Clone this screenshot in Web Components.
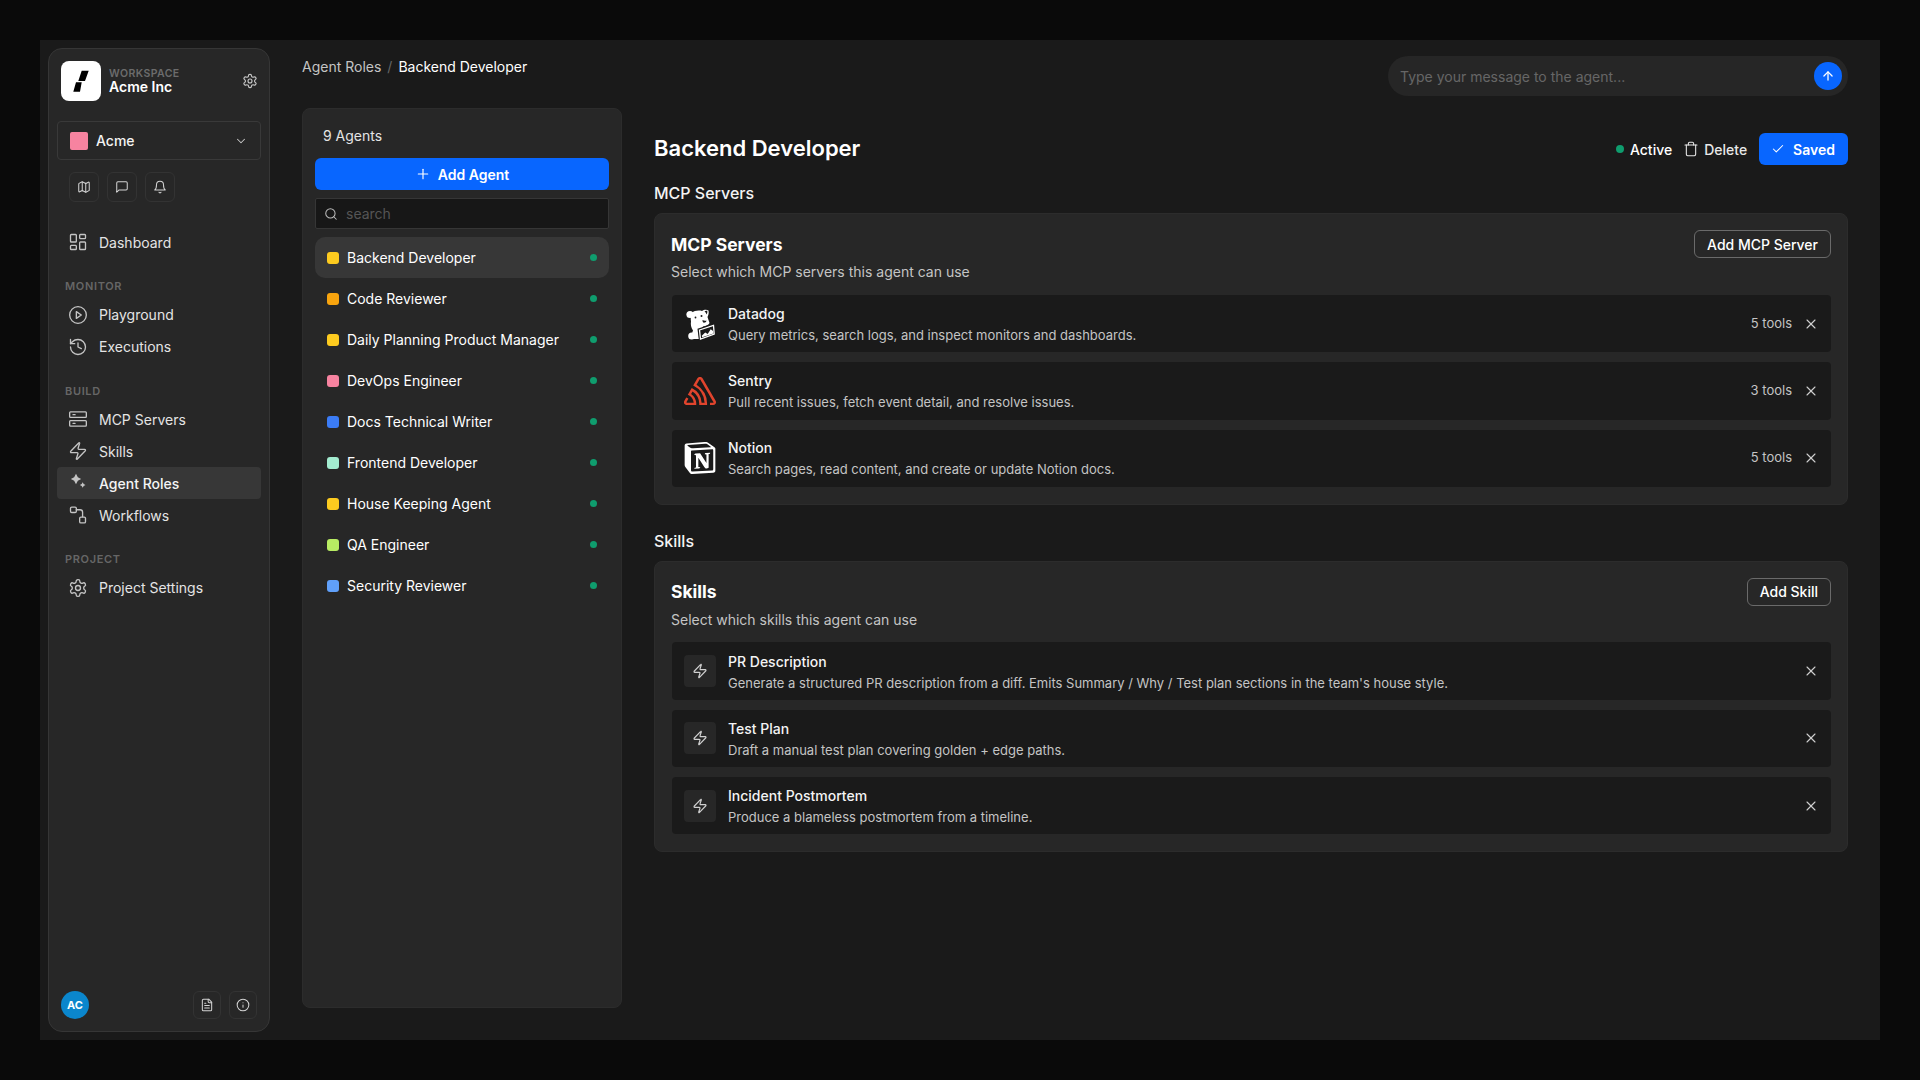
<!DOCTYPE html>
<html lang="en">
<head>
<meta charset="utf-8">
<title>Agent Roles</title>
<style>
    html, body { margin: 0; height: 100%; background: #0a0a0a; }
    body { font-family: Inter, "Liberation Sans", sans-serif; color: #fff; overflow: hidden; }
</style>
</head>
<body>
<app-frame>
    <app-sidebar slot="sidebar">
        <nav-link icon="dashboard">Dashboard</nav-link>
        <nav-group label="MONITOR">
            <nav-link icon="play">Playground</nav-link>
            <nav-link icon="history">Executions</nav-link>
        </nav-group>
        <nav-group label="BUILD">
            <nav-link icon="server">MCP Servers</nav-link>
            <nav-link icon="zap">Skills</nav-link>
            <nav-link icon="sparkles" active>Agent Roles</nav-link>
            <nav-link icon="workflow">Workflows</nav-link>
        </nav-group>
        <nav-group label="PROJECT">
            <nav-link icon="settings">Project Settings</nav-link>
        </nav-group>
    </app-sidebar>
    <top-bar slot="top" parent="Agent Roles" current="Backend Developer" placeholder="Type your message to the agent..."></top-bar>
    <agent-list slot="list" count="9 Agents">
        <agent-item color="#fdcb1f" selected>Backend Developer</agent-item>
        <agent-item color="#f8a40e">Code Reviewer</agent-item>
        <agent-item color="#fdcb1f">Daily Planning Product Manager</agent-item>
        <agent-item color="#f783a0">DevOps Engineer</agent-item>
        <agent-item color="#3b7cf6">Docs Technical Writer</agent-item>
        <agent-item color="#a3ecd0">Frontend Developer</agent-item>
        <agent-item color="#fdcb1f">House Keeping Agent</agent-item>
        <agent-item color="#b8ec63">QA Engineer</agent-item>
        <agent-item color="#60a0fa">Security Reviewer</agent-item>
    </agent-list>
    <role-detail slot="detail" title-text="Backend Developer">
        <section-card section="MCP Servers" subtitle="Select which MCP servers this agent can use" action="Add MCP Server">
            <resource-row logo="datadog" name="Datadog" desc="Query metrics, search logs, and inspect monitors and dashboards." meta="5 tools"></resource-row>
            <resource-row logo="sentry" name="Sentry" desc="Pull recent issues, fetch event detail, and resolve issues." meta="3 tools"></resource-row>
            <resource-row logo="notion" name="Notion" desc="Search pages, read content, and create or update Notion docs." meta="5 tools"></resource-row>
        </section-card>
        <section-card section="Skills" subtitle="Select which skills this agent can use" action="Add Skill">
            <resource-row logo="skill" name="PR Description" desc="Generate a structured PR description from a diff. Emits Summary / Why / Test plan sections in the team's house style."></resource-row>
            <resource-row logo="skill" name="Test Plan" desc="Draft a manual test plan covering golden + edge paths."></resource-row>
            <resource-row logo="skill" name="Incident Postmortem" desc="Produce a blameless postmortem from a timeline."></resource-row>
        </section-card>
    </role-detail>
</app-frame>

<script>
const ICONS = {
    settings: `<path d="M12.22 2h-.44a2 2 0 0 0-2 2v.18a2 2 0 0 1-1 1.73l-.43.25a2 2 0 0 1-2 0l-.15-.08a2 2 0 0 0-2.73.73l-.22.38a2 2 0 0 0 .73 2.73l.15.1a2 2 0 0 1 1 1.72v.51a2 2 0 0 1-1 1.74l-.15.09a2 2 0 0 0-.73 2.73l.22.38a2 2 0 0 0 2.73.73l.15-.08a2 2 0 0 1 2 0l.43.25a2 2 0 0 1 1 1.73V20a2 2 0 0 0 2 2h.44a2 2 0 0 0 2-2v-.18a2 2 0 0 1 1-1.73l.43-.25a2 2 0 0 1 2 0l.15.08a2 2 0 0 0 2.73-.73l.22-.39a2 2 0 0 0-.73-2.73l-.15-.08a2 2 0 0 1-1-1.74v-.5a2 2 0 0 1 1-1.74l.15-.09a2 2 0 0 0 .73-2.73l-.22-.38a2 2 0 0 0-2.73-.73l-.15.08a2 2 0 0 1-2 0l-.43-.25a2 2 0 0 1-1-1.73V4a2 2 0 0 0-2-2z"/><circle cx="12" cy="12" r="3"/>`,
    chevron: `<path d="m6 9 6 6 6-6"/>`,
    map: `<path d="M14.106 5.553a2 2 0 0 0 1.788 0l3.659-1.83A1 1 0 0 1 21 4.619v12.764a1 1 0 0 1-.553.894l-4.553 2.277a2 2 0 0 1-1.788 0l-4.212-2.106a2 2 0 0 0-1.788 0l-3.659 1.83A1 1 0 0 1 3 19.381V6.618a1 1 0 0 1 .553-.894l4.553-2.277a2 2 0 0 1 1.788 0z"/><path d="M15 5.764v15"/><path d="M9 3.236v15"/>`,
    message: `<path d="M21 15a2 2 0 0 1-2 2H7l-4 4V5a2 2 0 0 1 2-2h14a2 2 0 0 1 2 2z"/>`,
    bell: `<path d="M6 8a6 6 0 0 1 12 0c0 7 3 9 3 9H3s3-2 3-9"/><path d="M10.3 21a1.94 1.94 0 0 0 3.4 0"/>`,
    dashboard: `<rect x="3" y="3" width="7" height="9" rx="1"/><rect x="14" y="3" width="7" height="5" rx="1"/><rect x="14" y="12" width="7" height="9" rx="1"/><rect x="3" y="16" width="7" height="5" rx="1"/>`,
    play: `<circle cx="12" cy="12" r="10"/><path d="M10 8l6 4-6 4z"/>`,
    history: `<path d="M3 12a9 9 0 1 0 9-9 9.75 9.75 0 0 0-6.74 2.74L3 8"/><path d="M3 3v5h5"/><path d="M12 7v5l4 2"/>`,
    server: `<rect x="2" y="3.500" width="20" height="6.500" rx="1"/><rect x="2" y="14" width="20" height="6.500" rx="1"/><path d="M6 6.800h2.500"/><path d="M6 17.200h2.500"/>`,
    zap: `<path d="M4 14a1 1 0 0 1-.78-1.63l9.9-10.2a.5.5 0 0 1 .86.46l-1.92 6.02A1 1 0 0 0 13 10h7a1 1 0 0 1 .78 1.63l-9.9 10.2a.5.5 0 0 1-.86-.46l1.92-6.02A1 1 0 0 0 11 14z"/>`,
    sparkles: `<path fill="currentColor" stroke="none" d="M9.600 1 11.800 5 15.800 7.200 11.800 9.400 9.600 13.400 7.400 9.400 3.400 7.200 7.400 5z"/><path fill="currentColor" stroke="none" d="M17.600 11 18.800 13.200 21 14.400 18.800 15.600 17.600 17.800 16.400 15.600 14.200 14.400 16.400 13.200z"/>`,
    workflow: `<rect x="3" y="2.500" width="7" height="6.500" rx="1.500"/><path d="M10 5.700h4.500a3 3 0 0 1 3 3V14"/><rect x="14" y="14.500" width="7" height="7" rx="1.500"/>`,
    search: `<circle cx="11" cy="11" r="8"/><path d="m21 21-4.300-4.300"/>`,
    plus: `<path d="M5 12h14"/><path d="M12 5v14"/>`,
    check: `<path d="M20 6 9 17l-5-5"/>`,
    trash: `<path d="M3 6h18"/><path d="M19 6v14c0 1-1 2-2 2H7c-1 0-2-1-2-2V6"/><path d="M8 6V4c0-1 1-2 2-2h4c1 0 2 1 2 2v2"/>`,
    arrow: `<path d="m5 12 7-7 7 7"/><path d="M12 19V5"/>`,
    x: `<path d="M18 6 6 18"/><path d="m6 6 12 12"/>`,
    file: `<path d="M15 2H6a2 2 0 0 0-2 2v16a2 2 0 0 0 2 2h12a2 2 0 0 0 2-2V7Z"/><path d="M14 2v4a2 2 0 0 0 2 2h4"/><path d="M16 13H8"/><path d="M16 17H8"/><path d="M10 9H8"/>`,
    info: `<circle cx="12" cy="12" r="10"/><path d="M12 16v-4"/><path d="M12 8h.01"/>`
};

const LOGOS = {
    datadog: `<svg viewBox="0 0 36 36" width="36" height="36" fill="#fff">
        <circle cx="8" cy="8.500" r="3.600"/>
        <path d="M10 7C12 4.500 17 4 20 5c2-1.500 5-1.500 6.500-.5.5 2.500 0 4.500-1 6.500.5 2 1.500 4 2 6-.5 2-3.500 3-6.500 3.500L20 22l-3.500 2 .5 9H9.500c-.5-3 .5-6 1.500-8.500-2-3-2.500-6-2-9-.5-3-.500-6 1-8.500z"/>
        <circle cx="9.700" cy="30" r="3.500"/>
        <path fill="#1a1a1a" d="M22.500 5.200c1-.6 2-.7 2.800-.4.2 1.300 0 2.600-.6 3.700-.5-1.300-1.200-2.400-2.200-3.300z"/>
        <circle fill="#1a1a1a" cx="19.500" cy="10" r="1"/>
        <circle fill="#1a1a1a" cx="13.500" cy="11.500" r=".9"/>
        <path fill="#1a1a1a" d="M20.500 14c1.600.8 3 .9 4 .4-.2 1.600-1.700 2.600-3.300 2.200-.6-.8-.9-1.700-.7-2.600z"/>
        <path fill="#1a1a1a" d="M15.500 22.800 32.500 17l1 12.500L17 35z"/>
        <path fill="none" stroke="#fff" stroke-width="1.300" d="M17.500 24 31.500 19.300 32.200 28 18.500 33z"/>
        <path d="M19.800 29.700l3.400-3.200 2.500 1.500 3-4.700 2.400 1.700.3 2.400-11.200 3.800z"/>
    </svg>`,
    sentry: `<svg viewBox="0 0 24 24" width="32" height="32" fill="#e1442d"><path d="M13.910 2.505c-.873-1.448-2.972-1.448-3.844 0L6.904 7.920a15.478 15.478 0 0 1 8.530 12.811h-2.221A13.301 13.301 0 0 0 5.784 9.814l-2.926 5.060a7.650 7.650 0 0 1 4.435 5.848H2.194a.365.365 0 0 1-.298-.534l1.413-2.402a5.160 5.160 0 0 0-1.614-.913L.296 19.275a2.182 2.182 0 0 0 .812 2.999 2.240 2.240 0 0 0 1.086.288h6.983a9.322 9.322 0 0 0-3.845-8.318l1.110-1.922a11.470 11.470 0 0 1 4.950 10.240h5.915a17.242 17.242 0 0 0-7.885-15.280l2.244-3.845a.370.370 0 0 1 .504-.130c.255.140 9.750 16.708 9.928 16.900a.365.365 0 0 1-.327.543h-2.287c.029.612.029 1.223 0 1.831h2.297a2.206 2.206 0 0 0 1.922-3.310z"/></svg>`,
    notion: `<svg viewBox="0 0 24 24" width="32" height="32" fill="#fff"><path d="M4.459 4.208c.746.606 1.026.560 2.428.466l13.215-.793c.280 0 .047-.280-.046-.326L17.860 1.968c-.420-.326-.981-.700-2.055-.607L3.010 2.295c-.466.046-.560.280-.374.466zm.793 3.080v13.904c0 .747.373 1.027 1.214.980l14.523-.840c.841-.046.935-.560.935-1.167V6.354c0-.606-.233-.933-.748-.887l-15.177.887c-.560.047-.747.327-.747.933zm14.337.745c.093.420 0 .840-.420.888l-.700.140v10.264c-.608.327-1.168.514-1.635.514-.748 0-.935-.234-1.495-.933l-4.577-7.186v6.952L12.210 19s0 .840-1.168.840l-3.222.186c-.093-.186 0-.653.327-.746l.840-.233V9.854L7.822 9.760c-.094-.420.140-1.026.793-1.073l3.456-.233 4.764 7.279v-6.440l-1.215-.139c-.093-.514.280-.887.747-.933zM1.936 1.035l13.310-.980c1.634-.140 2.055-.047 3.082.700l4.249 2.986c.700.513.934.653.934 1.213v16.378c0 1.026-.373 1.634-1.680 1.726l-15.458.934c-.980.047-1.448-.093-1.962-.747l-3.129-4.060c-.560-.747-.793-1.306-.793-1.960V2.667c0-.839.374-1.540 1.447-1.632z"/></svg>`
};

class UiIcon extends HTMLElement {
    connectedCallback() {
        const size = this.getAttribute( "size" ) || 16;
        const stroke = this.getAttribute( "stroke" ) || 1.75;
        this.attachShadow( { mode: "open" } );
        this.shadowRoot.innerHTML = `
            <style>
                :host { display: inline-flex; flex: none; width: ${ size }px; height: ${ size }px; }
                svg { display: block; }
            </style>
            <svg viewBox="0 0 24 24" width="${ size }" height="${ size }" fill="none" stroke="currentColor"
                stroke-width="${ stroke }" stroke-linecap="round" stroke-linejoin="round">${ ICONS[ this.getAttribute( "name" ) ] }</svg>
        `;
    }
}
customElements.define( "ui-icon", UiIcon );

class IconButton extends HTMLElement {
    constructor () {
        super();
        this.attachShadow( { mode: "open" } );
        this.shadowRoot.innerHTML = `
            <style>
                :host {
                    display: flex;
                    align-items: center;
                    justify-content: center;
                    box-sizing: border-box;
                    border: 1px solid #333;
                    border-radius: 6px;
                    color: #d4d4d4;
                }
            </style>
            <slot></slot>
        `;
    }
}
customElements.define( "icon-button", IconButton );

class NavLink extends HTMLElement {
    connectedCallback() {
        this.attachShadow( { mode: "open" } );
        this.shadowRoot.innerHTML = `
            <style>
                :host {
                    display: flex;
                    align-items: center;
                    gap: 11px;
                    height: 32px;
                    padding-left: 11px;
                    border-radius: 4px;
                    font-size: 14px;
                    color: #e4e4e4;
                }
                :host([active]) {
                    background: #373737;
                    color: #f4f4f4;
                    font-weight: 500;
                }
                ui-icon { color: #c4c4c4; }
            </style>
            <ui-icon name="${ this.getAttribute( "icon" ) }" size="20" stroke="1.6"></ui-icon>
            <span><slot></slot></span>
        `;
    }
}
customElements.define( "nav-link", NavLink );

class NavGroup extends HTMLElement {
    connectedCallback() {
        this.attachShadow( { mode: "open" } );
        this.shadowRoot.innerHTML = `
            <style>
                :host { display: block; margin-top: 20px; }
                div {
                    height: 16px;
                    line-height: 16px;
                    margin-bottom: 4.5px;
                    padding-left: 8px;
                    font-size: 11px;
                    font-weight: 600;
                    letter-spacing: 0.06em;
                    color: #666;
                }
            </style>
            <div>${ this.getAttribute( "label" ) }</div>
            <slot></slot>
        `;
    }
}
customElements.define( "nav-group", NavGroup );

class AppSidebar extends HTMLElement {
    constructor () {
        super();
        this.attachShadow( { mode: "open" } );
        this.shadowRoot.innerHTML = `
            <style>
                :host {
                    display: flex;
                    flex-direction: column;
                    box-sizing: border-box;
                    width: 222px;
                    height: 984px;
                    margin: 8px;
                    padding: 12px 8px;
                    flex: none;
                    background: #272727;
                    border: 1px solid #363636;
                    border-radius: 14px;
                }
                #brand { display: flex; align-items: center; gap: 8px; height: 40px; padding: 0 4px; }
                #logo {
                    display: flex;
                    align-items: center;
                    justify-content: center;
                    width: 40px;
                    height: 40px;
                    background: #fff;
                    border-radius: 8px;
                }
                #names { flex: 1; }
                #eyebrow {
                    padding-top: 1px;
                    margin-bottom: -1px;
                    font-size: 10.5px;
                    line-height: 12px;
                    font-weight: 600;
                    letter-spacing: 0.04em;
                    color: #6c6c6c;
                }
                #workspace { font-size: 14px; line-height: 16px; font-weight: 600; color: #fff; }
                #brand ui-icon { color: #c8c8c8; margin-right: -1px; }
                #project {
                    display: flex;
                    align-items: center;
                    gap: 8px;
                    box-sizing: border-box;
                    height: 39px;
                    margin-top: 20px;
                    padding: 0 12px;
                    border: 1px solid #393939;
                    border-radius: 4px;
                    font-size: 14px;
                    font-weight: 500;
                    color: #f4f4f4;
                }
                #swatch { width: 18px; height: 18px; background: #f783a0; border-radius: 2px; }
                #project span { flex: 1; }
                #project ui-icon { color: #c8c8c8; }
                #tools { display: flex; gap: 8px; margin: 12px 0 24px; padding-left: 12px; }
                #tools icon-button { width: 30px; height: 30px; }
                #nav { flex: 1; }
                footer { display: flex; align-items: center; gap: 8px; padding: 0 4px; }
                #avatar {
                    display: flex;
                    align-items: center;
                    justify-content: center;
                    width: 28px;
                    height: 28px;
                    margin-right: auto;
                    background: #0b86cc;
                    border-radius: 50%;
                    font-size: 11px;
                    font-weight: 700;
                    color: #fff;
                }
                footer icon-button { width: 28px; height: 28px; }
            </style>
            <div id="brand">
                <div id="logo">
                    <svg viewBox="0 0 40 40" width="40" height="40"><path d="M20.700 9.700h7l-3.700 10.300h-6.700z M15 21.300h5.700l-1.700 9.400h-6.700z" fill="#000"/></svg>
                </div>
                <div id="names">
                    <div id="eyebrow">WORKSPACE</div>
                    <div id="workspace">Acme Inc</div>
                </div>
                <ui-icon name="settings" size="16" stroke="1.7"></ui-icon>
            </div>
            <div id="project">
                <div id="swatch"></div>
                <span>Acme</span>
                <ui-icon name="chevron" size="14"></ui-icon>
            </div>
            <div id="tools">
                <icon-button><ui-icon name="map" size="14"></ui-icon></icon-button>
                <icon-button><ui-icon name="message" size="14"></ui-icon></icon-button>
                <icon-button><ui-icon name="bell" size="14"></ui-icon></icon-button>
            </div>
            <div id="nav"><slot></slot></div>
            <footer>
                <div id="avatar">AC</div>
                <icon-button><ui-icon name="file" size="14"></ui-icon></icon-button>
                <icon-button><ui-icon name="info" size="14"></ui-icon></icon-button>
            </footer>
        `;
    }
}
customElements.define( "app-sidebar", AppSidebar );

class TopBar extends HTMLElement {
    connectedCallback() {
        this.attachShadow( { mode: "open" } );
        this.shadowRoot.innerHTML = `
            <style>
                :host { display: flex; justify-content: space-between; height: 40px; }
                #crumbs { display: flex; gap: 6px; font-size: 14px; line-height: 22px; color: #c4c4c4; }
                #crumbs i { font-style: normal; color: #666; }
                #crumbs b { font-weight: 400; color: #fff; }
                #chat {
                    display: flex;
                    align-items: center;
                    justify-content: space-between;
                    box-sizing: border-box;
                    width: 460px;
                    padding: 0 6px 0 12px;
                    background: #262626;
                    border-radius: 20px;
                    font-size: 14px;
                    color: #666;
                }
                #send {
                    display: flex;
                    align-items: center;
                    justify-content: center;
                    width: 28px;
                    height: 28px;
                    background: #0866ff;
                    border-radius: 50%;
                    color: #fff;
                }
            </style>
            <div id="crumbs">
                <span>${ this.getAttribute( "parent" ) }</span>
                <i>/</i>
                <b>${ this.getAttribute( "current" ) }</b>
            </div>
            <div id="chat">
                <span>${ this.getAttribute( "placeholder" ) }</span>
                <div id="send"><ui-icon name="arrow" size="14" stroke="2.2"></ui-icon></div>
            </div>
        `;
    }
}
customElements.define( "top-bar", TopBar );

class AgentItem extends HTMLElement {
    connectedCallback() {
        this.attachShadow( { mode: "open" } );
        this.shadowRoot.innerHTML = `
            <style>
                :host {
                    display: flex;
                    align-items: center;
                    gap: 8px;
                    height: 41px;
                    padding: 0 12px;
                    border-radius: 10px;
                    font-size: 14px;
                    color: #fff;
                }
                :host([selected]) { background: #373737; }
                #color { width: 12px; height: 12px; border-radius: 3px; background: ${ this.getAttribute( "color" ) }; }
                span { flex: 1; }
                #dot { width: 7px; height: 7px; border-radius: 50%; background: #0f9d6e; }
            </style>
            <div id="color"></div>
            <span><slot></slot></span>
            <div id="dot"></div>
        `;
    }
}
customElements.define( "agent-item", AgentItem );

class AgentList extends HTMLElement {
    connectedCallback() {
        this.attachShadow( { mode: "open" } );
        this.shadowRoot.innerHTML = `
            <style>
                :host {
                    display: block;
                    box-sizing: border-box;
                    width: 320px;
                    height: 900px;
                    padding: 17px 12px 12px;
                    flex: none;
                    background: #272727;
                    border: 1px solid #2c2c2c;
                    border-radius: 8px;
                }
                #count { padding-left: 8px; font-size: 14px; line-height: 20px; color: #e4e4e4; }
                #add {
                    display: flex;
                    align-items: center;
                    justify-content: center;
                    gap: 7px;
                    height: 32px;
                    margin-top: 12px;
                    background: #0866ff;
                    border-radius: 6px;
                    font-size: 14px;
                    font-weight: 600;
                    color: #fff;
                }
                #search {
                    display: flex;
                    align-items: center;
                    gap: 8px;
                    box-sizing: border-box;
                    height: 31px;
                    margin: 8px 0;
                    padding: 0 8px;
                    background: #171717;
                    border: 1px solid #363636;
                    border-radius: 2px;
                    font-size: 14px;
                    color: #555;
                }
                #search ui-icon { color: #bdbdbd; }
            </style>
            <div id="count">${ this.getAttribute( "count" ) }</div>
            <div id="add"><ui-icon name="plus" size="16"></ui-icon>Add Agent</div>
            <div id="search"><ui-icon name="search" size="14"></ui-icon>search</div>
            <slot></slot>
        `;
    }
}
customElements.define( "agent-list", AgentList );

class ResourceRow extends HTMLElement {
    connectedCallback() {
        const logo = this.getAttribute( "logo" );
        const meta = this.getAttribute( "meta" );
        let art = LOGOS[ logo ];
        if ( logo === "skill" ) {
            art = `<div id="tile"><ui-icon name="zap" size="16"></ui-icon></div>`;
        }
        this.attachShadow( { mode: "open" } );
        this.shadowRoot.innerHTML = `
            <style>
                :host {
                    display: flex;
                    align-items: center;
                    gap: 12px;
                    box-sizing: border-box;
                    height: 57.33px;
                    margin-left: 1px;
                    padding: 0 12px;
                    background: #1a1a1a;
                    border-radius: 4px;
                }
                #art { display: flex; align-items: center; justify-content: center; width: 32px; height: 32px; flex: none; }
                #art svg { flex: none; }
                #tile {
                    display: flex;
                    align-items: center;
                    justify-content: center;
                    width: 32px;
                    height: 32px;
                    background: #272727;
                    border-radius: 4px;
                    color: #d0d0d0;
                }
                #text { flex: 1; }
                :host([logo="skill"]) #text { padding-top: 1px; }
                #name { font-size: 14px; line-height: 20px; font-weight: 500; color: #f4f4f4; }
                #desc { margin-top: 2px; font-size: 13px; line-height: 18px; color: #c4c4c4; }
                #meta { padding-bottom: 2px; margin-right: -1px; font-size: 13px; color: #c4c4c4; }
                #close { color: #d0d0d0; }
            </style>
            <div id="art">${ art }</div>
            <div id="text">
                <div id="name">${ this.getAttribute( "name" ) }</div>
                <div id="desc">${ this.getAttribute( "desc" ) }</div>
            </div>
            ${ meta ? `<div id="meta">${ meta }</div>` : "" }
            <ui-icon id="close" name="x" size="16" stroke="1.6"></ui-icon>
        `;
    }
}
customElements.define( "resource-row", ResourceRow );

class SectionCard extends HTMLElement {
    connectedCallback() {
        const section = this.getAttribute( "section" );
        this.attachShadow( { mode: "open" } );
        this.shadowRoot.innerHTML = `
            <style>
                :host { display: block; }
                #label { height: 24px; margin-bottom: 8px; font-size: 16px; line-height: 24px; font-weight: 500; color: #f4f4f4; }
                #card {
                    box-sizing: border-box;
                    padding: 16px 16px 17px;
                    background: #272727;
                    border: 1px solid #2c2c2c;
                    border-radius: 8px;
                }
                #head { display: flex; align-items: center; justify-content: space-between; height: 28px; }
                #title { font-size: 17.5px; font-weight: 700; color: #fff; }
                #action {
                    display: flex;
                    align-items: center;
                    box-sizing: border-box;
                    height: 28px;
                    padding: 0 12px;
                    border: 1px solid #6a6a6a;
                    border-radius: 6px;
                    font-size: 14px;
                    font-weight: 500;
                    color: #fff;
                }
                #sub { margin: 4px 0 13px; font-size: 14px; line-height: 20px; color: #c4c4c4; }
                :host(:last-child) #sub { margin-bottom: 12.5px; }
                #rows { display: flex; flex-direction: column; gap: 10px; }
            </style>
            <div id="label">${ section }</div>
            <div id="card">
                <div id="head">
                    <div id="title">${ section }</div>
                    <div id="action">${ this.getAttribute( "action" ) }</div>
                </div>
                <div id="sub">${ this.getAttribute( "subtitle" ) }</div>
                <div id="rows"><slot></slot></div>
            </div>
        `;
    }
}
customElements.define( "section-card", SectionCard );

class RoleDetail extends HTMLElement {
    connectedCallback() {
        this.attachShadow( { mode: "open" } );
        this.shadowRoot.innerHTML = `
            <style>
                :host { display: flex; flex-direction: column; flex: 1; min-width: 0; padding-top: 25px; }
                header { display: flex; align-items: center; height: 32px; margin-bottom: 16px; }
                h1 { flex: 1; margin: 0; padding-bottom: 2px; font-size: 22px; font-weight: 600; color: #fff; }
                #status { display: flex; align-items: center; gap: 6px; font-size: 14px; font-weight: 500; color: #fff; }
                #status i { width: 8px; height: 8px; border-radius: 50%; background: #0f9d6e; }
                #delete { display: flex; align-items: center; gap: 5px; margin-left: 11px; font-size: 14px; font-weight: 500; color: #e8e8e8; }
                #saved {
                    display: flex;
                    align-items: center;
                    gap: 8px;
                    height: 32px;
                    margin-left: 12px;
                    padding: 0 13px 0 12px;
                    background: #0866ff;
                    border-radius: 6px;
                    font-size: 14px;
                    font-weight: 600;
                    color: #fff;
                }
                #body { display: flex; flex-direction: column; gap: 24px; }
            </style>
            <header>
                <h1>${ this.getAttribute( "title-text" ) }</h1>
                <div id="status"><i></i>Active</div>
                <div id="delete"><ui-icon name="trash" size="16" stroke="1.6"></ui-icon>Delete</div>
                <div id="saved"><ui-icon name="check" size="14"></ui-icon>Saved</div>
            </header>
            <div id="body"><slot></slot></div>
        `;
    }
}
customElements.define( "role-detail", RoleDetail );

class AppFrame extends HTMLElement {
    constructor () {
        super();
        this.attachShadow( { mode: "open" } );
        this.shadowRoot.innerHTML = `
            <style>
                :host {
                    display: flex;
                    box-sizing: border-box;
                    width: 1840px;
                    height: 1000px;
                    margin: 40px;
                    background: #1a1a1a;
                }
                main { flex: 1; min-width: 0; padding: 16px 32px 0 24px; }
                #columns { display: flex; gap: 32px; margin-top: 12px; }
            </style>
            <slot name="sidebar"></slot>
            <main>
                <slot name="top"></slot>
                <div id="columns">
                    <slot name="list"></slot>
                    <slot name="detail"></slot>
                </div>
            </main>
        `;
    }
}
customElements.define( "app-frame", AppFrame );
</script>
</body>
</html>
